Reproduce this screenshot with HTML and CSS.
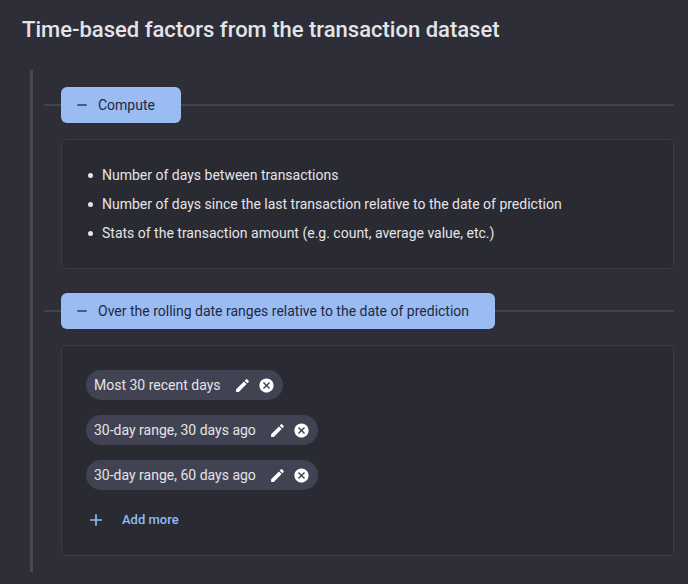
FILE: index.html
```html
<!DOCTYPE html>
<html lang="en">
<head>
<meta charset="utf-8">
<meta name="viewport" content="width=device-width, initial-scale=1">
<title>Time-based factors</title>
<link rel="stylesheet" href="styles.css">
</head>
<body>
<svg class="sprite" aria-hidden="true">
  <symbol id="minus" viewBox="0 0 24 24"><path d="M5 11h14v2H5z"/></symbol>
  <symbol id="plus" viewBox="0 0 24 24"><path d="M19 13h-6v6h-2v-6H5v-2h6V5h2v6h6z"/></symbol>
  <symbol id="pencil" viewBox="0 0 24 24"><path d="M3 17.25V21h3.75L17.81 9.94l-3.75-3.75L3 17.25zM20.71 7.04a1 1 0 0 0 0-1.41l-2.34-2.34a1 1 0 0 0-1.41 0l-1.83 1.83 3.75 3.75 1.83-1.83z"/></symbol>
  <symbol id="cancel" viewBox="0 0 24 24"><path d="M12 2C6.47 2 2 6.47 2 12s4.47 10 10 10 10-4.47 10-10S17.53 2 12 2zm5 13.59L15.59 17 12 13.41 8.41 17 7 15.59 10.59 12 7 8.41 8.41 7 12 10.59 15.59 7 17 8.41 13.41 12 17 15.59z"/></symbol>
</svg>
<main class="page">
  <h1 class="title">Time-based factors from the transaction dataset</h1>
  <div class="rail">
    <section class="group">
      <div class="group-head">
        <button class="toggle" type="button" aria-expanded="true"><svg class="icon"><use href="#minus"/></svg>Compute</button>
      </div>
      <div class="panel">
        <ul class="factors">
          <li>Number of days between transactions</li>
          <li>Number of days since the last transaction relative to the date of prediction</li>
          <li>Stats of the transaction amount (e.g. count, average value, etc.)</li>
        </ul>
      </div>
    </section>
    <section class="group">
      <div class="group-head">
        <button class="toggle" type="button" aria-expanded="true"><svg class="icon"><use href="#minus"/></svg>Over the rolling date ranges relative to the date of prediction</button>
      </div>
      <div class="panel ranges">
        <div class="chip">
          <span class="chip-label">Most 30 recent days</span>
          <button class="chip-action" type="button" aria-label="Edit"><svg class="icon"><use href="#pencil"/></svg></button>
          <button class="chip-action" type="button" aria-label="Remove"><svg class="icon"><use href="#cancel"/></svg></button>
        </div>
        <div class="chip">
          <span class="chip-label">30-day range, 30 days ago</span>
          <button class="chip-action" type="button" aria-label="Edit"><svg class="icon"><use href="#pencil"/></svg></button>
          <button class="chip-action" type="button" aria-label="Remove"><svg class="icon"><use href="#cancel"/></svg></button>
        </div>
        <div class="chip">
          <span class="chip-label">30-day range, 60 days ago</span>
          <button class="chip-action" type="button" aria-label="Edit"><svg class="icon"><use href="#pencil"/></svg></button>
          <button class="chip-action" type="button" aria-label="Remove"><svg class="icon"><use href="#cancel"/></svg></button>
        </div>
        <button class="add" type="button"><svg class="icon add-icon"><use href="#plus"/></svg>Add more</button>
      </div>
    </section>
  </div>
</main>
</body>
</html>
```
FILE: styles.css
```css
* {
  box-sizing: border-box;
}

body {
  margin: 0;
  background: #2e2e38;
  color: #e4e4e8;
  font: 14px/20px Roboto, "Liberation Sans", sans-serif;
}

button {
  border: 0;
  padding: 0;
  background: none;
  color: inherit;
  font: inherit;
  cursor: pointer;
}

.sprite {
  display: none;
}

.icon {
  width: 16px;
  height: 16px;
  flex: none;
  fill: currentColor;
}

.page {
  padding: 14px 14px 12px 22px;
}

.title {
  margin: 0 0 24px;
  font-size: 22px;
  line-height: 32px;
  font-weight: 500;
}

.rail {
  display: flex;
  flex-direction: column;
  gap: 24px;
  margin-left: 8px;
  padding: 17px 0 16px 11px;
  border-left: 3px solid #474756;
}

.group-head {
  display: flex;
  align-items: center;
  margin-bottom: 16px;
}

.group-head::before,
.group-head::after {
  content: "";
  height: 2px;
  background: #434350;
}

.group-head::before {
  width: 17px;
}

.group-head::after {
  flex: 1;
}

.toggle {
  display: flex;
  align-items: center;
  gap: 8px;
  height: 36px;
  padding: 0 26px 0 13px;
  border-radius: 6px;
  background: #9abcf2;
  color: #1d2a44;
}

.panel {
  margin-left: 17px;
  padding: 21px 24px 20px;
  border: 1px solid #3c3c48;
  border-radius: 5px;
  background: #2a2a33;
}

.factors {
  margin: 0;
  padding-left: 2px;
  line-height: 29px;
  list-style: none;
}

.factors li {
  display: flex;
  align-items: center;
  gap: 9px;
}

.factors li::before {
  content: "";
  flex: none;
  width: 5px;
  height: 5px;
  border-radius: 50%;
  background: currentColor;
}

.ranges {
  display: flex;
  flex-direction: column;
  align-items: flex-start;
  gap: 15px;
  padding-top: 24px;
}

.chip {
  display: flex;
  align-items: center;
  gap: 7px;
  height: 30px;
  padding: 0 8px;
  border-radius: 15px;
  background: #424352;
}

.chip-label {
  margin-right: 6px;
}

.chip-action {
  display: flex;
  color: #fff;
}

.chip-action .icon {
  width: 17px;
  height: 17px;
}

.add {
  display: flex;
  align-items: center;
  gap: 16px;
  height: 30px;
  color: #8fbcf5;
  font-size: 13px;
  font-weight: 500;
}

.add-icon {
  width: 20px;
  height: 20px;
}
```
